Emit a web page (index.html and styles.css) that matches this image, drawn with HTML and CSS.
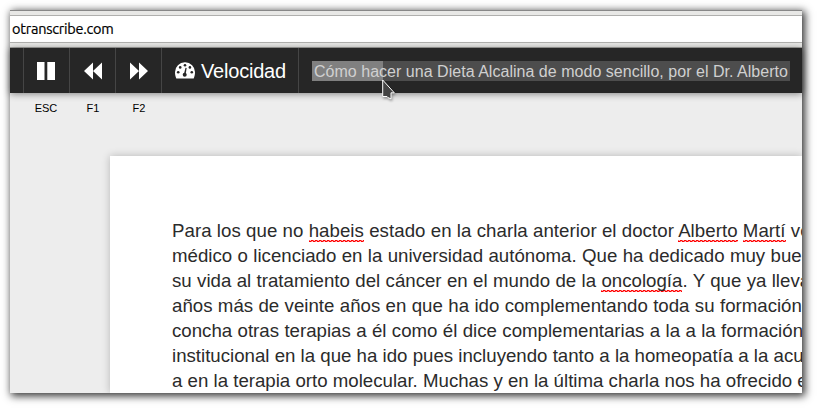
FILE: index.html
```html
<!DOCTYPE html>
<html lang="es">
<head>
<meta charset="utf-8">
<title>oTranscribe</title>
<link rel="stylesheet" href="styles.css">
</head>
<body>
<main class="window">
  <header class="browser"><div class="address">otranscribe.com</div></header>
  <nav class="toolbar">
    <div class="edge"></div>
    <div class="button pause"><svg width="18" height="18" viewBox="0 0 18 18"><path d="M0 0h7.500v18H0zM10.300 0H18v18h-7.700z"/></svg><span class="key">ESC</span></div>
    <div class="button"><svg width="18" height="18" viewBox="0 0 18 18"><path d="M9 .5v17L0 9zM18 .5v17L9 9z"/></svg><span class="key">F1</span></div>
    <div class="button"><svg width="18" height="18" viewBox="0 0 18 18"><path d="M0 .5v17L9 9zM9 .5v17L18 9z"/></svg><span class="key">F2</span></div>
    <div class="speed">
      <svg width="20" height="17" viewBox="0 0 20 17"><path d="M10 .3A9.800 9.800 0 0 0 0 10.200c0 2.400.5 4.300 1.300 6.200h17.400c.8-1.900 1.300-3.800 1.300-6.200A9.800 9.800 0 0 0 10 .3z"/><g class="mark"><circle cx="3.200" cy="10.300" r="1.300"/><circle cx="5.200" cy="5.400" r="1.300"/><circle cx="10" cy="3.300" r="1.300"/><circle cx="14.900" cy="5.400" r="1.300"/><circle cx="16.800" cy="10.300" r="1.300"/><circle cx="9.700" cy="12.700" r="2"/><path d="M10.500 5.800l1.200.3-1.200 6.700-1.700-.4z"/></g></svg>
      <span>Velocidad</span>
    </div>
    <div class="title"><span class="media">Cómo hacer una Dieta Alcalina de modo sencillo, por el Dr. Alberto</span></div>
  </nav>
  <section class="page">
    <div class="text">
      <p class="wider">Para los que no <span class="typo">habeis</span> estado en la charla anterior el doctor <span class="typo">Alberto</span> <span class="typo">Martí</span> ve</p>
      <p class="wide">médico o licenciado en la universidad autónoma. Que ha dedicado muy bue</p>
      <p class="wide">su vida al tratamiento del cáncer en el mundo de la <span class="typo">oncología</span>. Y que ya lleva</p>
      <p class="wide">años más de veinte años en que ha ido complementando toda su formación</p>
      <p class="wide">concha otras terapias a él como él dice complementarias a la a la formación</p>
      <p>institucional en la que ha ido pues incluyendo tanto a la homeopatía a la acu</p>
      <p>a en la terapia orto molecular. Muchas y en la última charla nos ha ofrecido e</p>
    </div>
  </section>
</main>
<svg class="pointer" width="14" height="22" viewBox="0 0 14 22"><path d="M.7 1v16.500h4.300l1 1.200 3 1.100v-6h3.300z"/></svg>
</body>
</html>
```

FILE: styles.css
```css
* { box-sizing: border-box; }
body {
  margin: 0;
  padding: 10px;
  width: 818px;
  height: 409px;
  overflow: hidden;
  background: #fff;
  font-family: "Liberation Sans", Arial, sans-serif;
}
.window {
  width: 792px;
  height: 383px;
  display: flex;
  flex-direction: column;
  background: #ededed;
  box-shadow: 2px 2px 8px 1px rgba(0, 0, 0, .8);
  clip-path: inset(-10px -16px -16px -10px);
}
.browser {
  flex: none;
  height: 38px;
  padding: 4px 0;
  background: #e8e8e6;
  border-top: 1px solid #888;
  border-bottom: 1px solid #a5a5a2;
}
.address {
  height: 28px;
  border: solid #b0b0ae;
  border-width: 1px 0;
  padding-left: 2px;
  background: #fff;
  color: #000;
  font: 14.5px/26px Ubuntu, "Noto Sans", sans-serif;
  -webkit-text-stroke: .2px #000;
  letter-spacing: -.24px;
}
.toolbar {
  position: relative;
  flex: none;
  display: flex;
  height: 45px;
  background: #262626;
  box-shadow: 0 1px 7px rgba(0, 0, 0, .45);
  color: #fff;
  fill: #fff;
}
.edge { width: 13px; }
.button {
  position: relative;
  width: 46px;
  border-left: 1px solid #454545;
  display: flex;
  align-items: center;
  justify-content: center;
}
.pause svg { margin-right: 1px; }
.key {
  position: absolute;
  left: 0;
  top: 54px;
  width: 46px;
  text-align: center;
  color: #000;
  font-size: 11px;
  line-height: 13px;
}
.pause .key { left: -1px; }
.speed {
  width: 138px;
  display: flex;
  align-items: center;
  padding-left: 13px;
  gap: 6px;
  border: solid #454545;
  border-width: 0 1px;
  font-size: 20px;
  letter-spacing: -.2px;
}
.speed span { padding-top: 1px; }
.mark { fill: #262626; }
.title {
  flex: 1;
  padding: 13px 0 0 13px;
  white-space: nowrap;
}
.media {
  display: block;
  width: 478px;
  height: 20px;
  padding-left: 2px;
  font-size: 16px;
  line-height: 21px;
  letter-spacing: .025px;
  color: #d0d0d0;
  background: linear-gradient(90deg, #808080 71px, #4d4d4d 71px);
}
.page {
  flex: 1;
  min-height: 0;
  margin: 63px 0 0 100px;
  padding: 62px 0 0 62px;
  background: #fff;
  box-shadow: 0 0 8px rgba(0, 0, 0, .23);
  clip-path: inset(-10px 0 0 -10px);
}
.text p {
  margin: 0;
  white-space: nowrap;
  color: #2b2b2b;
  font-size: 18.67px;
  line-height: 25px;
}
.text .wide { word-spacing: .2px; }
.text .wider { letter-spacing: .05px; }
.typo {
  padding-bottom: 1px;
  background:
    repeating-linear-gradient(90deg, #f00 0 2px, #f66 2px 3px, #fbb 3px 4px) 0 100% / 100% 1px no-repeat,
    repeating-linear-gradient(90deg, #f66 0 1px, #fbb 1px 2px, #f00 2px 4px) 0 calc(100% - 1px) / 100% 1px no-repeat;
}
.pointer {
  position: absolute;
  left: 382px;
  top: 79px;
  fill: #444;
  stroke: #fff;
  stroke-width: 1;
  filter: drop-shadow(1px 2px 1px rgba(0, 0, 0, .3));
}
```
